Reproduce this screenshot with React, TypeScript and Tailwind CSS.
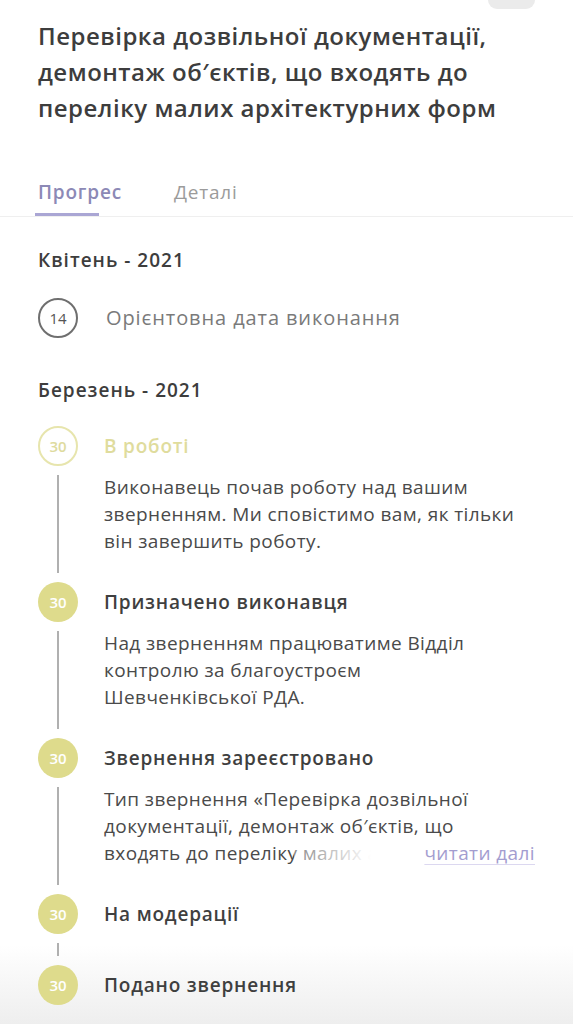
import React from "react";

type Step = {
  day: string;
  title: string;
  lines?: string[];
  active?: boolean;
  more?: boolean;
};

const steps: Step[] = [
  {
    day: "30",
    title: "В роботі",
    lines: [
      "Виконавець почав роботу над вашим",
      "зверненням. Ми сповістимо вам, як тільки",
      "він завершить роботу.",
    ],
    active: true,
  },
  {
    day: "30",
    title: "Призначено виконавця",
    lines: [
      "Над зверненням працюватиме Відділ",
      "контролю за благоустроєм",
      "Шевченківської РДА.",
    ],
  },
  {
    day: "30",
    title: "Звернення зареєстровано",
    lines: [
      "Тип звернення «Перевірка дозвільної",
      "документації, демонтаж об′єктів, що",
      "входять до переліку малих архітектурних форм»",
    ],
    more: true,
  },
  { day: "30", title: "На модерації" },
  { day: "30", title: "Подано звернення" },
];

const StepRow = ({ step, last }: { step: Step; last: boolean }) => {
  const lines = step.lines ?? [];
  const shown = step.more ? lines.slice(0, -1) : lines;
  const tail = step.more ? lines[lines.length - 1] : null;

  return (
    <div className="flex">
      <div className="flex w-10 shrink-0 flex-col items-center">
        {step.active ? (
          <div className="flex h-10 w-10 items-center justify-center rounded-full border-2 border-[#e7e5ad] text-[15px] font-semibold text-[#dedb9e]">
            {step.day}
          </div>
        ) : (
          <div className="flex h-10 w-10 items-center justify-center rounded-full bg-[#dedb8c] text-[15px] font-semibold text-white">
            {step.day}
          </div>
        )}
        {!last && <div className="my-[9px] w-[2px] flex-1 bg-[#b0b0b0]" />}
      </div>
      <div
        className={
          "ml-[26px] min-w-0 flex-1 " +
          (last ? "" : step.lines ? "pb-[27px]" : "pb-[31px]")
        }
      >
        <div
          className={
            "flex h-10 items-center text-[19px] font-semibold tracking-[0.8px] " +
            (step.active ? "text-[#dfdc9d]" : "text-[#3f3f3f]")
          }
        >
          {step.title}
        </div>
        {step.lines && (
          <div className="mt-[8px] text-[19px] leading-[27px] tracking-[0.4px] text-[#4a4a4a]">
            {shown.map((l, i) => (
              <div key={i} className="whitespace-nowrap">
                {l}
              </div>
            ))}
            {tail && (
              <div className="flex items-center">
                <div className="relative w-[300px] overflow-hidden whitespace-nowrap">
                  {tail}
                  <div className="absolute inset-y-0 left-[190px] right-0 bg-[linear-gradient(90deg,rgba(255,255,255,0.35),#ffffff_70%)]" />
                </div>
                <span className="ml-auto whitespace-nowrap text-[#a39dd0] underline decoration-[#dcd8f0] underline-offset-4">
                  читати далі
                </span>
              </div>
            )}
          </div>
        )}
      </div>
    </div>
  );
};

export default function App() {
  return (
    <div
      className="min-h-[1024px] w-full bg-[linear-gradient(180deg,#ffffff_945px,#eeeeee_1024px)]"
      style={{ fontFamily: '"Open Sans", "Noto Sans", sans-serif' }}
    >
      <div className="flex justify-end pr-[38px]">
        <div className="h-[9px] w-[47px] rounded-b-[12px] bg-[#ebebeb]" />
      </div>

      <h1 className="mt-[9px] px-[38px] text-[24px] font-semibold leading-[36px] tracking-[0.5px] text-[#3d3d3d]">
        <span className="block whitespace-nowrap">
          Перевірка дозвільної документації,
        </span>
        <span className="block whitespace-nowrap">
          демонтаж об′єктів, що входять до
        </span>
        <span className="block whitespace-nowrap">
          переліку малих архітектурних форм
        </span>
      </h1>

      <div className="mt-[54px] flex gap-[52px] border-b border-[#efefef] px-[38px]">
        <div className="relative pb-[12px] text-[19px] font-semibold leading-[24px] tracking-[0.8px] text-[#8c89b6]">
          Прогрес
          <div className="absolute bottom-0 left-[-3px] h-[3px] w-[64px] bg-[#aaa6d4]" />
        </div>
        <div className="pb-[12px] text-[19px] font-medium leading-[24px] tracking-[0.8px] text-[#9b9b9b]">
          Деталі
        </div>
      </div>

      <div className="px-[38px] pt-[31px]">
        <h2 className="text-[19px] font-semibold leading-[24px] tracking-[1px] text-[#3d3d3d]">
          Квітень - 2021
        </h2>
        <div className="mt-[26px] flex items-center">
          <div className="flex h-10 w-10 items-center justify-center rounded-full border-2 border-[#6f6f6f] text-[15px] text-[#555555]">
            14
          </div>
          <span className="ml-[28px] text-[20px] font-medium tracking-[0.9px] text-[#7a7a7a]">
            Орієнтовна дата виконання
          </span>
        </div>

        <h2 className="mt-[40px] text-[19px] font-semibold leading-[24px] tracking-[1px] text-[#3d3d3d]">
          Березень - 2021
        </h2>

        <div className="mt-[24px]">
          {steps.map((s, i) => (
            <StepRow key={i} step={s} last={i === steps.length - 1} />
          ))}
        </div>
      </div>
    </div>
  );
}
